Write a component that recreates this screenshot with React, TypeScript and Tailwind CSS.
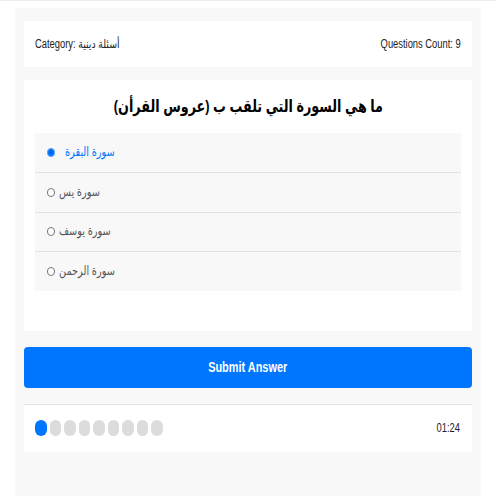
const options = ["سورة البقرة", "سورة يس", "سورة يوسف", "سورة الرحمن"];

const font = {
  fontFamily: '"Liberation Sans", "DejaVu Sans", sans-serif',
};

// the whole screen is drawn in a condensed face, so squeeze each label
const Narrow = ({
  origin,
  children,
}: {
  origin: "left" | "right" | "center";
  children: React.ReactNode;
}) => (
  <span
    className={`inline-block scale-x-[0.78] whitespace-nowrap ${
      origin === "left" ? "origin-left" : origin === "right" ? "origin-right" : "origin-center"
    }`}
  >
    {children}
  </span>
);

export default function App() {
  const selected = 0;
  const total = 9;
  const current = 0;

  return (
    <div className="min-h-[498px] bg-white border-t border-[#ececec]" style={font}>
      <div className="mx-[15px] mt-[7px] min-h-[488px] bg-[#f8f8f8] px-[9px] pt-[13px]">
        <div className="flex h-[46px] items-center justify-between bg-white px-[11px] text-[12px] text-[#222]">
          <Narrow origin="left">Category: أسئلة دينية</Narrow>
          <Narrow origin="right">Questions Count: 9</Narrow>
        </div>

        <div className="mt-[13px] bg-white px-[11px] pt-[14px] pb-[40px]">
          <h2 className="text-center text-[17px] font-bold text-black" dir="rtl">
            <span className="inline-block scale-x-[0.75] whitespace-nowrap origin-center">
              ما هي السورة التي تلقب ب (عروس القرأن)
            </span>
          </h2>
          <ul className="mt-[13px] bg-[#f8f8f8]">
            {options.map((opt, i) => (
              <li
                key={opt}
                className={`flex h-[39.5px] items-center pl-[12px] text-[12.5px] ${
                  i > 0 ? "border-t border-[#e2e2e2]" : ""
                } ${i === selected ? "text-[#0076ff]" : "text-[#555]"}`}
              >
                {i === selected ? (
                  <span className="flex h-[9px] w-[8px] items-center justify-center rounded-full border border-[#5aa2ff] bg-[#0076ff]">
                    <span className="h-[4px] w-[4px] rounded-full bg-[#0066dd]" />
                  </span>
                ) : (
                  <span className="h-[9px] w-[8px] rounded-full border border-[#777] bg-white" />
                )}
                <span className={i === selected ? "ml-[10px]" : "ml-[4px]"} dir="rtl">
                  <Narrow origin="left">{opt}</Narrow>
                </span>
              </li>
            ))}
          </ul>
        </div>

        <button className="mt-[16px] flex h-[41px] w-full items-center justify-center rounded-[4px] bg-[#0076ff] text-[14px] font-bold text-white">
          <Narrow origin="center">Submit Answer</Narrow>
        </button>

        <div className="mt-[16px] flex h-[48px] items-center justify-between border-t border-[#e2e2e2] bg-white px-[11px]">
          <div className="flex gap-[3px]">
            {Array.from({ length: total }).map((_, i) => (
              <span
                key={i}
                className={`h-[16px] w-[11.5px] rounded-full ${
                  i === current ? "bg-[#0076ff]" : "bg-[#dcdcdc]"
                }`}
              />
            ))}
          </div>
          <span className="mr-[1px] text-[12px] text-[#222]">
            <Narrow origin="right">01:24</Narrow>
          </span>
        </div>
      </div>
    </div>
  );
}
